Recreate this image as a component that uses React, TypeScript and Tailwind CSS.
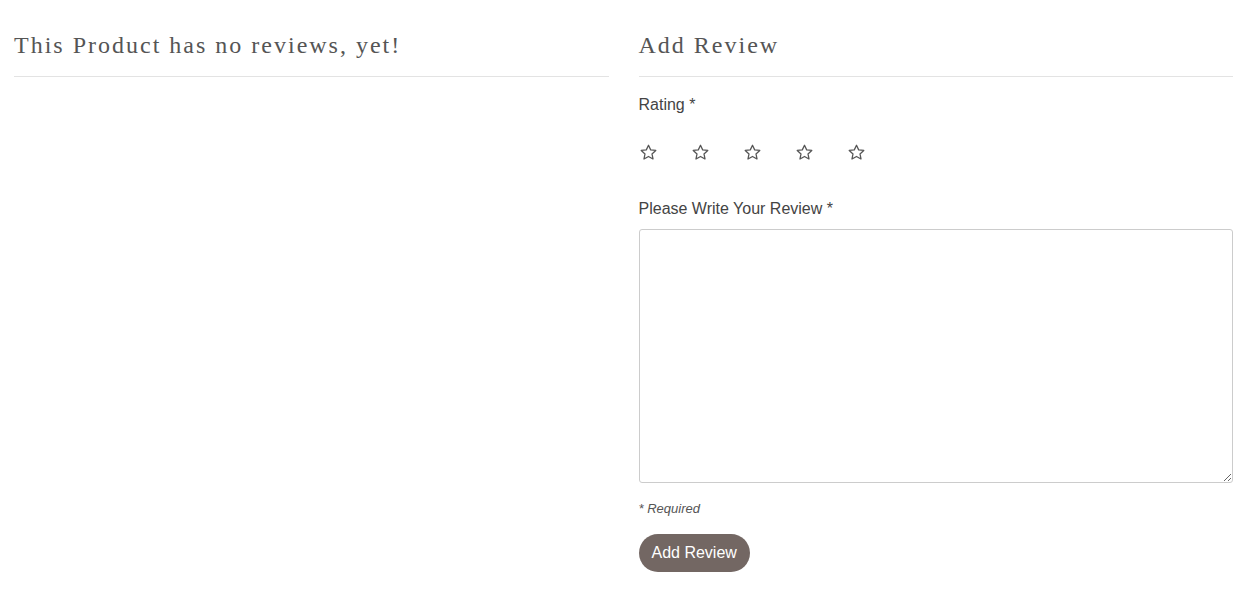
import React from "react";

function Star() {
  return (
    <svg width="19" height="19" viewBox="0 0 24 24" fill="none" stroke="#555" strokeWidth="1.6" strokeLinejoin="round">
      <path d="M12 2.8l2.75 5.9 6.45.75-4.8 4.4 1.3 6.35L12 17l-5.7 3.2 1.3-6.35-4.8-4.4 6.45-.75z" />
    </svg>
  );
}

export default function App() {
  return (
    <div className="w-[1244px] h-[594px] bg-white flex gap-[30px] pl-[14px] pr-[11px] pt-[31px] font-['Liberation_Sans',Arial,sans-serif] text-[#444]">
      <div className="flex-1">
        <h2 className="font-['Liberation_Serif','Times_New_Roman',serif] text-[24px] leading-[29px] tracking-[2px] text-[#555] pb-[16px] border-b border-[#e3e3e3]">
          This Product has no reviews, yet!
        </h2>
      </div>
      <div className="flex-1 flex flex-col">
        <h2 className="font-['Liberation_Serif','Times_New_Roman',serif] text-[24px] leading-[29px] tracking-[2px] text-[#555] pb-[16px] border-b border-[#e3e3e3]">
          Add Review
        </h2>
        <div className="mt-[16px] text-[16px] leading-[24px]">Rating *</div>
        <div className="mt-[26px] flex gap-[33px] h-[19px]">
          <Star />
          <Star />
          <Star />
          <Star />
          <Star />
        </div>
        <div className="mt-[35px] text-[16px] leading-[24px]">Please Write Your Review *</div>
        <textarea className="mt-[8px] h-[254px] w-full border border-[#cccccc] rounded-[3px] resize-y outline-none"></textarea>
        <div className="mt-[18px] text-[13px] leading-[16px] italic text-[#555]">* Required</div>
        <button className="mt-[17px] self-start h-[38px] px-[13px] rounded-full bg-[#736763] text-white text-[16px] leading-[20px]">
          Add Review
        </button>
      </div>
    </div>
  );
}
